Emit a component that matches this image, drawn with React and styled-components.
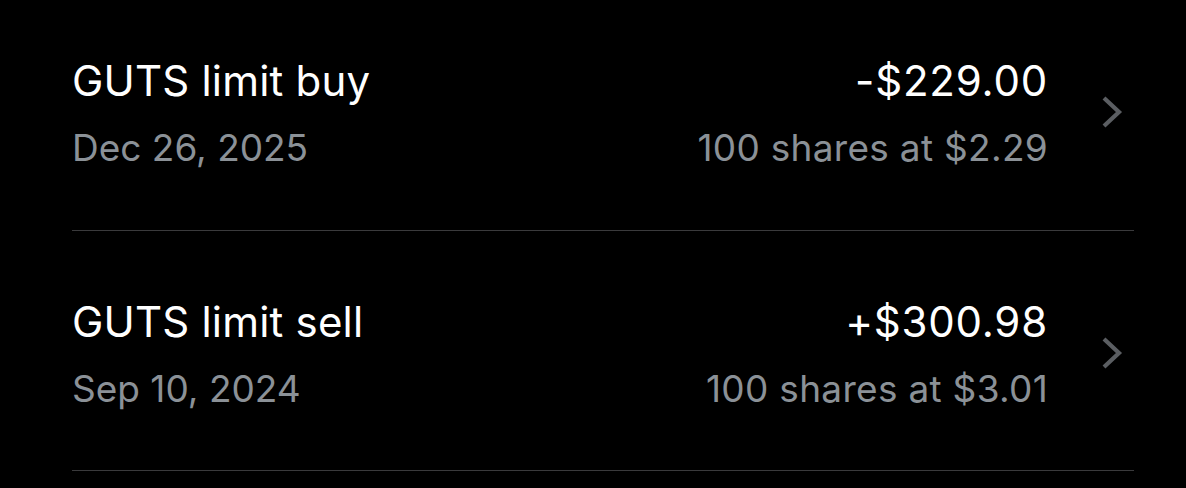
import React from "react";
import styled, { createGlobalStyle } from "styled-components";

const GlobalStyle = createGlobalStyle`
  html, body {
    margin: 0;
    padding: 0;
    background: #000;
  }
  body {
    font-family: Inter, "Noto Sans", "Liberation Sans", sans-serif;
    -webkit-font-smoothing: antialiased;
  }
`;

const List = styled.div`
  width: 1186px;
  height: 488px;
  overflow: hidden;
  background: #000;
  padding: 0 52px 0 72px;
  box-sizing: border-box;
`;

const Row = styled.div`
  display: flex;
  align-items: flex-start;
  height: ${(p) => (p.$first ? "231px" : "240px")};
  padding-top: ${(p) => (p.$first ? "55px" : "65px")};
  box-sizing: border-box;
  border-bottom: 1px solid #3a3a3c;
`;

const Left = styled.div`
  flex: 1;
  display: flex;
  flex-direction: column;
  gap: 18px;
`;

const Right = styled.div`
  display: flex;
  flex-direction: column;
  align-items: flex-end;
  gap: 18px;
`;

const Title = styled.div`
  color: #fff;
  font-size: 42px;
  line-height: 52px;
  font-weight: 400;
  letter-spacing: ${(p) => (p.$amount ? "0.8px" : "0.2px")};
`;

const Sub = styled.div`
  color: #8b9197;
  font-size: 37px;
  line-height: 45px;
  font-weight: 400;
  letter-spacing: ${(p) => (p.$detail ? "0.3px" : "0")};
`;

const Chevron = styled.div`
  width: 86px;
  margin-top: 39px;
  display: flex;
  justify-content: flex-end;
  padding-right: 10px;
  box-sizing: border-box;
  svg {
    display: block;
  }
`;

const orders = [
  { title: "GUTS limit buy", date: "Dec 26, 2025", amount: "-$229.00", detail: "100 shares at $2.29" },
  { title: "GUTS limit sell", date: "Sep 10, 2024", amount: "+$300.98", detail: "100 shares at $3.01" },
];

export default function App() {
  return (
    <>
      <GlobalStyle />
      <List>
        {orders.map((o, i) => (
          <Row key={o.title} $first={i === 0}>
            <Left>
              <Title>{o.title}</Title>
              <Sub>{o.date}</Sub>
            </Left>
            <Right>
              <Title $amount>{o.amount}</Title>
              <Sub $detail>{o.detail}</Sub>
            </Right>
            <Chevron>
              <svg width="24" height="36" viewBox="0 0 24 36">
                <path d="M4 4 L19 18 L4 32" fill="none" stroke="#5b5e62" strokeWidth="4.2" strokeLinecap="butt" strokeLinejoin="miter" />
              </svg>
            </Chevron>
          </Row>
        ))}
      </List>
    </>
  );
}
